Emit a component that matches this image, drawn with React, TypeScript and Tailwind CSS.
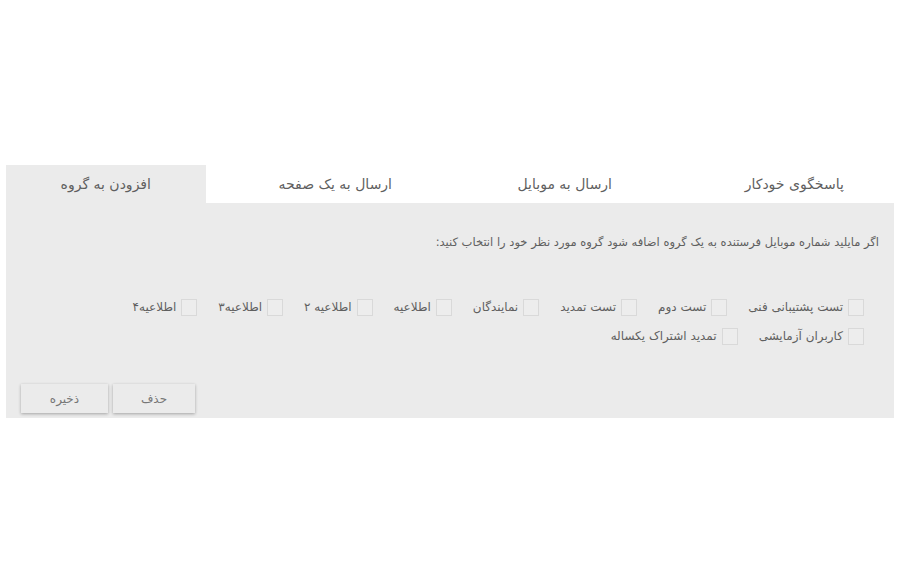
import React from 'react';

const tabs = ['پاسخگوی خودکار', 'ارسال به موبایل', 'ارسال به یک صفحه', 'افزودن به گروه'];
const rowOne = ['تست پشتیبانی فنی', 'تست دوم', 'تست تمدید', 'نمایندگان', 'اطلاعیه', 'اطلاعیه ۲', 'اطلاعیه۳', 'اطلاعیه۴'];
const rowTwo = ['کاربران آزمایشی', 'تمدید اشتراک یکساله'];

const Check = ({ label }: { label: string }) => (
  <label className="flex items-center gap-[5px] cursor-pointer">
    <span className="w-[16px] h-[17px] border border-[#d9d9d9] bg-[#ededed] shrink-0" />
    <span className="text-[12px] text-[#5f5f5f]">{label}</span>
  </label>
);

export default function App() {
  return (
    <div dir="rtl" className="w-[904px] h-[583px] bg-white pt-[165px]" style={{ fontFamily: '"DejaVu Sans", sans-serif' }}>
      <div className="w-[888px] mr-[10px]">
        <div className="flex gap-[30px] h-[38px]">
          {tabs.map((t, i) => (
            <div
              key={t}
              className={`w-[200px] flex items-center justify-center text-[14px] text-[#5f5f5f] ${i === tabs.length - 1 ? 'bg-[#ebebeb]' : ''}`}
            >
              {t}
            </div>
          ))}
        </div>
        <div className="bg-[#ebebeb] h-[215px] flex flex-col">
          <p className="text-[11.5px] text-[#5f5f5f] pr-[15px] pt-[31px]">
            اگر مایلید شماره موبایل فرستنده به یک گروه اضافه شود گروه مورد نظر خود را انتخاب کنید:
          </p>
          <div className="pr-[30px] mt-[47px] flex flex-col gap-[11px]">
            <div className="flex gap-[21px]">
              {rowOne.map((l) => (
                <Check key={l} label={l} />
              ))}
            </div>
            <div className="flex gap-[21px]">
              {rowTwo.map((l) => (
                <Check key={l} label={l} />
              ))}
            </div>
          </div>
          <div className="mt-auto mb-[5px] flex justify-end gap-[5px] pl-[15px]">
            <button className="w-[82px] h-[29px] bg-[#ebebeb] text-[12px] text-[#777] shadow-[0_1px_3px_rgba(0,0,0,0.3)]">حذف</button>
            <button className="w-[87px] h-[29px] bg-[#ebebeb] text-[12px] text-[#777] shadow-[0_1px_3px_rgba(0,0,0,0.3)]">ذخیره</button>
          </div>
        </div>
      </div>
    </div>
  );
}
